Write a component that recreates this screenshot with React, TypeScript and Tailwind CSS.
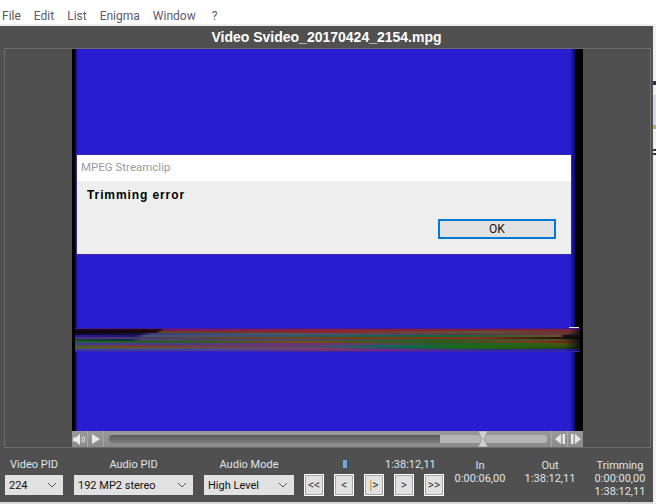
import React from "react";

const ui = "font-['Roboto','Open_Sans',sans-serif]";

const bandRows = [
  "bg-[linear-gradient(90deg,#1c0420_0%,#2a0418_17%,#84106e_17.5%,#8a1c4e_55%,#7e1e52_98%,#201020_100%)]",
  "bg-[linear-gradient(90deg,#0c0410_0%,#180610_15%,#2a0a10_16%,#5a4a24_17%,#8a2c1c_50%,#5c5a20_80%,#6a3420_98%,#181008_100%)]",
  "bg-[linear-gradient(90deg,#100c30_0%,#14123c_13%,#403a80_15%,#4a5478_40%,#55406a_65%,#6c3244_97%,#181018_100%)]",
  "bg-[linear-gradient(90deg,#281a9c_0%,#20146c_12%,#485470_14%,#2c5a60_40%,#0e6c30_75%,#6a5020_96%,#101010_97%)]",
  "bg-[linear-gradient(90deg,#5a2a80_0%,#4a3a70_12%,#6a4038_30%,#7a3c18_55%,#88301a_80%,#2c2018_93%,#080808_100%)]",
  "bg-[linear-gradient(90deg,#0c4a38_0%,#083040_11%,#3a4c60_13%,#484a6a_40%,#2e5a30_70%,#5a4a28_96%,#101010_100%)]",
  "bg-[linear-gradient(90deg,#2a5a30_0%,#305a20_20%,#7a4a10_45%,#2a6010_70%,#803818_90%,#702810_97%,#101010_100%)]",
  "bg-[linear-gradient(90deg,#3a3aa0_0%,#45408c_25%,#74307e_50%,#1e6038_75%,#1a6820_90%,#4a5018_97%,#101010_100%)]",
  "bg-[linear-gradient(90deg,#4a5430_0%,#843434_10%,#70346c_40%,#1a6068_60%,#1e6a10_75%,#3a5410_97%,#101010_100%)]",
  "bg-[linear-gradient(90deg,#4a6030_0%,#5a5050_25%,#5c4478_50%,#106058_65%,#1c640c_85%,#204810_97%,#101010_100%)]",
  "bg-[linear-gradient(90deg,#3a34b0_0%,#4a40a8_30%,#803264_50%,#7c1c90_62%,#303090_80%,#2a20c0_97%,#101040_100%)]",
];

function Select({ value, className }: { value: string; className: string }) {
  return (
    <div className={`flex h-5 items-center justify-between bg-[#e1e1e1] pl-1 pr-[6px] text-[11px] leading-none text-[#111] ${className}`}>
      <span>{value}</span>
      <svg width="10" height="6" viewBox="0 0 10 6" fill="none" stroke="#555" strokeWidth="1">
        <path d="M1 1l4 4 4-4" />
      </svg>
    </div>
  );
}

function Btn({ children }: { children: React.ReactNode }) {
  return (
    <div className="flex h-[22px] w-5 items-center justify-center border border-white bg-[#e1e1e1] text-[12px] leading-none text-[#444] shadow-[inset_0_0_0_1px_#a8a8a8]">
      {children}
    </div>
  );
}

function Readout({ lines }: { lines: string[] }) {
  return (
    <div className="flex w-[70px] flex-col items-center pt-px text-[11px] leading-[13px] text-[#dfe5ec]">
      {lines.map((l, i) => (
        <span key={i}>{l}</span>
      ))}
    </div>
  );
}

function Cell({ children, className = "" }: { children: React.ReactNode; className?: string }) {
  return <div className={`flex h-full w-4 items-center justify-center ${className}`}>{children}</div>;
}

const blue =
  "bg-[linear-gradient(90deg,#0a0a50_0px,#2a1ccf_3px,#2a1ccf_calc(100%-10px),#0a0a70_calc(100%-5px),#000_calc(100%-4px)),repeating-linear-gradient(0deg,#2a1cd0_0px,#2a1cd0_2px,#2819c8_3px,#2a1dcc_4px)]";

export default function App() {
  return (
    <div className={`flex h-[504px] w-[656px] flex-col overflow-hidden bg-white ${ui}`}>
      <div className="flex h-6 shrink-0 items-center gap-[13px] bg-white pl-[2px] pt-[7px] text-[12px] leading-none text-[#5d5970]">
        <span className="text-[#555]">File</span>
        <span>Edit</span>
        <span>List</span>
        <span>Enigma</span>
        <span>Window</span>
        <span className="ml-[3px]">?</span>
      </div>
      <div className="h-[2px] shrink-0 bg-[#eeeeee]" />

      <div className="flex min-h-0 flex-1">
        <div className="flex w-[653px] shrink-0 flex-col bg-[#505050]">
          <div className="flex h-[22px] shrink-0 items-center justify-center font-['Liberation_Sans',sans-serif] text-[14px] font-bold leading-none tracking-normal text-white">
            Video Svideo_20170424_2154.mpg
          </div>

          <div className="ml-1 mr-[2px] flex h-[400px] shrink-0 flex-col items-center border border-[#6c6c6c]">
            <div className="relative flex h-[382px] w-[511px] shrink-0 bg-[#2a1ccf]">
              <div className="w-[3px] shrink-0 bg-black" />
              <div className="flex min-w-0 flex-1 flex-col">
                <div className={`flex-1 ${blue}`} />
                <div className="flex shrink-0 flex-col">
                  <div className="h-px bg-[#3a2088]" />
                  {bandRows.map((c) => (
                    <div key={c} className={`h-[2px] ${c}`} />
                  ))}
                  <div className="h-px bg-[#3a24a8]" />
                </div>
                <div className={`h-[79px] shrink-0 ${blue}`} />
              </div>
              <div className="w-[3px] shrink-0 bg-black" />

              <div className="absolute left-[497px] top-[278px] h-px w-[10px] bg-[#e8e8e8]" />

              <div className="absolute left-[5px] top-[106px] flex h-[99px] w-[494px] flex-col shadow-[0_0_0_1px_#3a2aa0]">
                <div className="flex h-[26px] shrink-0 items-center bg-white pl-1 text-[11.5px] leading-none text-[#9a9aa2]">
                  MPEG Streamclip
                </div>
                <div className="relative flex-1 bg-[#eeeeee]">
                  <div className="pl-[10px] pt-[7px] font-['Liberation_Sans',sans-serif] text-[12px] font-bold leading-[14px] tracking-[0.9px] text-black">
                    Trimming error
                  </div>
                  <div className="absolute left-[361px] top-[38px] flex h-5 w-[118px] items-center justify-center border-2 border-[#0078d7] bg-[#e1e1e1] text-[12px] leading-none text-[#111]">
                    OK
                  </div>
                </div>
              </div>
            </div>

            <div className="flex h-4 w-[511px] shrink-0 items-center bg-[linear-gradient(180deg,#9a9a9a,#8a8a8a)] text-[#e8e8e8]">
              <Cell className="border-r border-[#a8a8a8]">
                <svg width="13" height="11" viewBox="0 0 13 11" fill="currentColor">
                  <path d="M0 3.5h2.5L7 0v11L2.5 7.5H0z" />
                  <path d="M8.5 3c1.2 1.4 1.2 3.600 0 5M10.200 1.800c1.900 2.100 1.900 5.300 0 7.400" fill="none" stroke="currentColor" />
                </svg>
              </Cell>
              <Cell className="border-r border-[#a8a8a8]">
                <svg width="8" height="10" viewBox="0 0 8 10" fill="currentColor">
                  <path d="M0 0l8 5-8 5z" />
                </svg>
              </Cell>
              <div className="relative ml-[5px] flex h-[8px] w-[438px] overflow-hidden rounded-[3px] bg-[#b4b4b4]">
                <div className="h-full w-[331px] bg-[linear-gradient(180deg,#5a5a5a,#7c7c7c)]" />
              </div>
              <div className="relative">
                <svg className="absolute -left-[70px] -top-2" width="12" height="16" viewBox="0 0 12 16">
                  <path d="M1 0h10L7 8l4 8H1l4-8z" fill="#cfcfcf" stroke="#8a8a8a" strokeWidth="0.6" />
                </svg>
              </div>
              <div className="ml-1 flex h-full">
                <Cell className="border-l border-[#a8a8a8]">
                  <svg width="10" height="10" viewBox="0 0 10 10" fill="currentColor">
                    <path d="M6 0v10L0 5zM7.500 0H10v10H7.500z" />
                  </svg>
                </Cell>
                <Cell className="border-l border-[#a8a8a8]">
                  <svg width="10" height="10" viewBox="0 0 10 10" fill="currentColor">
                    <path d="M4 0v10l6-5zM0 0h2.500v10H0z" />
                  </svg>
                </Cell>
              </div>
            </div>
          </div>

          <div className="flex min-h-0 flex-1 pl-[5px] pt-[10px] text-[11px] text-[#dfe5ec]">
            <div className="flex w-[58px] flex-col items-center">
              <span className="h-[17px] leading-[14px]">Video PID</span>
              <Select value="224" className="w-[58px]" />
            </div>
            <div className="ml-[11px] flex w-[119px] flex-col items-center">
              <span className="h-[17px] leading-[14px]">Audio PID</span>
              <Select value="192 MP2 stereo" className="w-[119px]" />
            </div>
            <div className="ml-[11px] flex w-[90px] flex-col items-center">
              <span className="h-[17px] leading-[14px]">Audio Mode</span>
              <Select value="High Level" className="w-[90px]" />
            </div>
            <div className="ml-[10px] flex w-[140px] flex-col">
              <div className="flex h-[16px] items-start">
                <div className="ml-[39px] mt-[2px] h-2 w-1 bg-[#6fa8dc]" />
                <span className="ml-[38px] leading-[14px]">1:38:12,11</span>
              </div>
              <div className="flex gap-[10px]">
                <Btn>&lt;&lt;</Btn>
                <Btn>&lt;</Btn>
                <Btn>
                  <span className="text-[#d9822b]">|</span>&gt;
                </Btn>
                <Btn>&gt;</Btn>
                <Btn>&gt;&gt;</Btn>
              </div>
            </div>
            <div className="ml-px flex">
              <Readout lines={["In", "0:00:06,00"]} />
              <Readout lines={["Out", "1:38:12,11"]} />
              <Readout lines={["Trimming", "0:00:00,00", "1:38:12,11"]} />
            </div>
          </div>
          <div className="h-[2px] shrink-0 bg-[#d8d8d8]" />
        </div>

        <div className="flex flex-1 flex-col bg-[#f0f0f0]">
          <div className="mt-[55px] h-[4px] bg-[#3a2a5a]" />
          <div className="mt-[10px] h-[30px] bg-[#d4dae6]" />
          <div className="h-[4px] bg-[#c4a860]" />
          <div className="mt-[20px] h-[2px] bg-[#333]" />
          <div className="mt-[2px] h-[2px] bg-[#333]" />
        </div>
      </div>
    </div>
  );
}
